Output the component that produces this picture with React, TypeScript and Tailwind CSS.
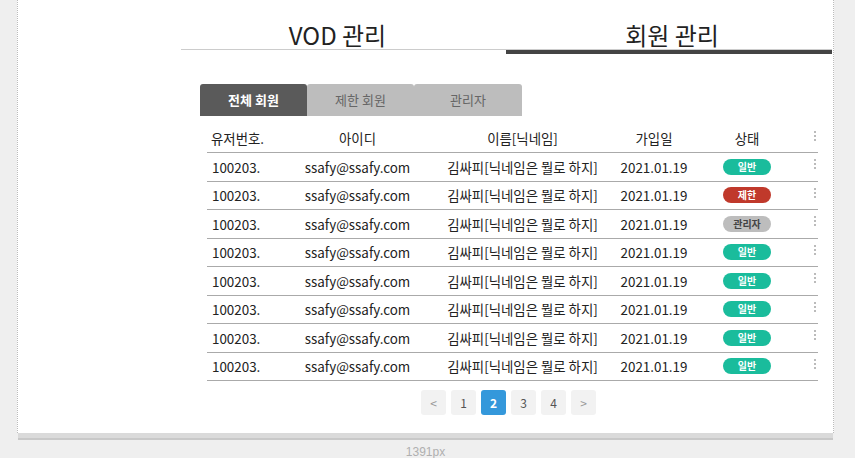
import React from "react";

const rows = [
  { s: "일반" },
  { s: "제한" },
  { s: "관리자" },
  { s: "일반" },
  { s: "일반" },
  { s: "일반" },
  { s: "일반" },
  { s: "일반" },
];

function Badge({ s }: { s: string }) {
  const cls =
    s === "일반"
      ? "bg-[#1abc9c] text-white"
      : s === "제한"
      ? "bg-[#c0392b] text-white"
      : "bg-[#bdbdbd] text-[#444]";
  return (
    <span
      className={`inline-flex h-[16px] w-[48px] items-center justify-center rounded-full text-[10px] font-bold leading-none ${cls}`}
    >
      {s}
    </span>
  );
}

function Kebab() {
  return (
    <div className="flex flex-col items-center gap-[2px] -mt-[5px]">
      <span className="block h-[2px] w-[2px] bg-[#bbb]" />
      <span className="block h-[2px] w-[2px] bg-[#bbb]" />
      <span className="block h-[2px] w-[2px] bg-[#bbb]" />
    </div>
  );
}

export default function App() {
  return (
    <div
      className="h-[458px] w-[855px] overflow-hidden bg-[#efefef]"
      style={{ fontFamily: '"Noto Sans CJK KR", "Noto Sans", sans-serif' }}
    >
      <div className="ml-[17px] w-[817px]">
        <div className="h-[433px] border-x border-dotted border-[#bbb] bg-white pl-[163px]">
          {/* heading tabs */}
          <div className="flex w-[651px]">
            <div className="flex w-[325px] flex-col">
              <div className="h-[50px] border-b border-[#ccc] pt-[19px] text-center text-[24px] font-normal leading-[32px] text-[#222]">
                <span className="-ml-[12px]">VOD 관리</span>
              </div>
              <div className="h-[4px]" />
            </div>
            <div className="flex w-[326px] flex-col">
              <div className="h-[50px] border-b border-[#ccc] pt-[19px] text-center text-[24px] font-normal leading-[32px] text-[#222]">
                <span className="ml-[6px]">회원 관리</span>
              </div>
              <div className="h-[4px] bg-[#444]" />
            </div>
          </div>

          {/* sub tabs */}
          <div className="ml-[19px] mt-[30px] flex h-[32px] w-[322px]">
            <div className="flex w-[107px] items-center justify-center rounded-t-[3px] bg-[#5a5a5a] text-[13px] font-bold text-white">
              전체 회원
            </div>
            <div className="flex w-[107px] items-center justify-center rounded-t-[3px] bg-[#bdbdbd] text-[13px] text-[#666]">
              제한 회원
            </div>
            <div className="flex w-[108px] items-center justify-center rounded-t-[3px] bg-[#bdbdbd] text-[13px] text-[#666]">
              관리자
            </div>
          </div>

          {/* table */}
          <div className="ml-[26px] w-[611px] text-[13.4px] text-[#222]">
            <div className="flex h-[37px] items-center border-b border-[#aaa] pt-[8px]">
              <div className="w-[83px] pl-[4px]">유저번호.</div>
              <div className="w-[135px] text-center">아이디</div>
              <div className="w-[195px] text-center">이름[닉네임]</div>
              <div className="w-[68px] text-center">가입일</div>
              <div className="w-[118px] text-center">상태</div>
              <div className="flex w-[12px] justify-end pr-[2px]">
                <Kebab />
              </div>
            </div>
            {rows.map((r, i) => (
              <div
                key={i}
                className="flex h-[28.5px] items-center border-b border-[#aaa]"
              >
                <div className="w-[83px] pl-[5px]">100203.</div>
                <div className="w-[135px] text-center">ssafy@ssafy.com</div>
                <div className="w-[195px] text-center">김싸피[닉네임은 뭘로 하지]</div>
                <div className="w-[68px] text-center">2021.01.19</div>
                <div className="flex w-[118px] justify-center">
                  <Badge s={r.s} />
                </div>
                <div className="flex w-[12px] justify-end pr-[2px]">
                  <Kebab />
                </div>
              </div>
            ))}
            <div className="mt-[9px] flex gap-[5px] pl-[214px]">
              {["<", "1", "2", "3", "4", ">"].map((p) => (
                <div
                  key={p}
                  className={`flex h-[25px] w-[25px] items-center justify-center rounded-[3px] text-[12px] ${
                    p === "2"
                      ? "bg-[#3498db] font-bold text-white"
                      : p === "<" || p === ">"
                      ? "bg-[#f2f2f2] text-[#999]"
                      : "bg-[#f2f2f2] text-[#555]"
                  }`}
                >
                  {p}
                </div>
              ))}
            </div>
          </div>
        </div>
        <div className="ml-[1px] h-[7px] w-[815px] border-b-2 border-[#c8c8c8] bg-[#dadada]" />
        <div
          className="mt-[4px] text-center text-[12px] leading-[16px] text-[#b0b0b0]"
          style={{ fontFamily: '"Liberation Sans", Arial, sans-serif' }}
        >
          <span>1391px</span>
        </div>
      </div>
    </div>
  );
}
